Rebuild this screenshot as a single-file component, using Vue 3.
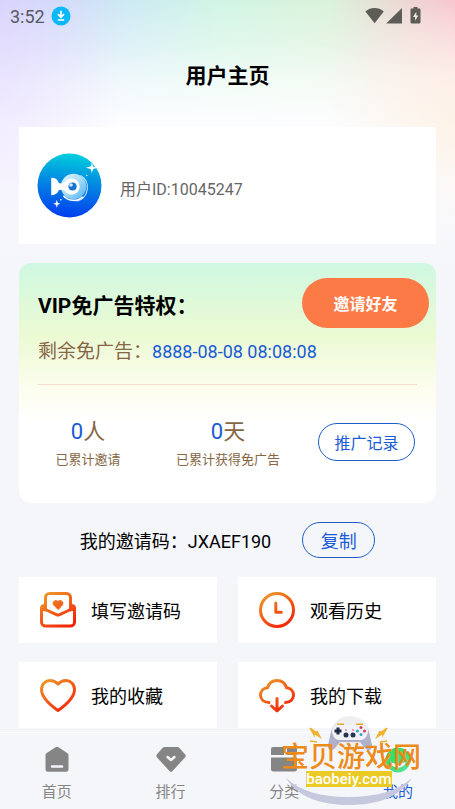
<script setup>
const stats = [
  { value: '0', unit: '人', label: '已累计邀请' },
  { value: '0', unit: '天', label: '已累计获得免广告' },
]
const entries = [
  { id: 'invite', label: '填写邀请码' },
  { id: 'history', label: '观看历史' },
  { id: 'favorite', label: '我的收藏' },
  { id: 'download', label: '我的下载' },
]
const tabs = [
  { id: 'home', label: '首页' },
  { id: 'rank', label: '排行' },
  { id: 'category', label: '分类' },
  { id: 'mine', label: '我的' },
]
</script>

<template>
  <div class="page">
    <div class="status">
      <span>3:52</span>
      <svg class="status-download" viewBox="0 0 20 20" aria-hidden="true">
        <circle cx="10" cy="10" r="9.5" fill="#0cb9f8" />
        <path d="M10 4.800v6M7 8.200l3 3 3-3M6.800 14h6.400" fill="none" stroke="#fff" stroke-width="1.700" />
      </svg>
      <svg class="status-system" viewBox="0 0 56 18" aria-hidden="true">
        <g fill="#5d5d57">
          <path d="M.4 4.500C5.600-.1 13.600-.1 18.800 4.500L9.600 16.200z" />
          <path d="M37 1v15.500H21.200z" />
          <path d="M48.500 0h4v1.600h1.800c.700 0 1.200.500 1.200 1.200v12.500c0 .700-.500 1.200-1.200 1.200h-7.600c-.700 0-1.200-.500-1.200-1.200V2.800c0-.700.500-1.200 1.200-1.200h1.800z" />
        </g>
        <path d="M51.300 4.800L48 10h2.100v3.800l3.200-5.200h-2z" fill="#f0e8dc" />
      </svg>
    </div>

    <h1 class="title">用户主页</h1>

    <main class="content">
      <section class="user">
        <svg class="avatar" viewBox="0 0 64 64" aria-hidden="true">
          <defs>
            <linearGradient id="avatarFill" x1="0.550" y1="0" x2="0.450" y2="1">
              <stop offset="0" stop-color="#00cfdd" />
              <stop offset="0.450" stop-color="#0388e2" />
              <stop offset="1" stop-color="#003df0" />
            </linearGradient>
            <linearGradient id="fishFill" x1="0" y1="0" x2="1" y2="1">
              <stop offset="0" stop-color="#e6f7ff" />
              <stop offset="0.500" stop-color="#a5daf8" />
              <stop offset="1" stop-color="#4bb2f2" />
            </linearGradient>
          </defs>
          <circle cx="32" cy="32" r="31.500" fill="url(#avatarFill)" />
          <circle cx="36" cy="33" r="12.500" fill="url(#fishFill)" />
          <path d="M43 22a14 14 0 0 1-4 25.500" fill="none" stroke="#cfeaff" stroke-width="1" />
          <path d="M26 42c5 6 14 6 19 1" fill="none" stroke="#fff" stroke-width="1.500" />
          <path d="M14 24.500c3.500-.5 6.500 1.500 7.500 5 1.500.8 3.500.5 6-.5v8c-2.500-1-4.500-1-6-.3-1 3-4 5-7.500 4.800z" fill="#fff" />
          <circle cx="34" cy="33" r="8" fill="#fff" />
          <circle cx="35" cy="33" r="4" fill="#1673d2" />
          <circle cx="33.500" cy="31.500" r="1.800" fill="#cdeafc" />
          <path d="M54 9.500l1.300 3.700 4.700 1.300-4.700 1.300L54 19.500l-1.300-3.700-4.700-1.300 4.700-1.300zM19.500 46l.9 3.100 2.600.9-2.600.9-.9 3.100-.9-3.100-2.600-.9 2.600-.9z" fill="#fff" />
          <circle cx="23.500" cy="46" r=".8" fill="#fff" />
          <circle cx="49" cy="22" r=".7" fill="#fff" />
        </svg>
        <span>用户ID:10045247</span>
      </section>

      <section class="vip">
        <div class="vip-head">
          <h2>VIP免广告特权：</h2>
          <button class="invite" type="button">邀请好友</button>
        </div>
        <p class="remain">剩余免广告：<span class="date">8888-08-08 08:08:08</span></p>
        <div class="stats">
          <div v-for="s in stats" :key="s.label" class="stat">
            <strong><span class="number">{{ s.value }}</span>{{ s.unit }}</strong>
            <span>{{ s.label }}</span>
          </div>
          <button class="outline record" type="button">推广记录</button>
        </div>
      </section>

      <div class="code">
        <span>我的邀请码：JXAEF190</span>
        <button class="outline copy" type="button">复制</button>
      </div>

      <div class="entries">
        <a v-for="e in entries" :key="e.id" class="entry" href="#">
          <svg viewBox="0 0 38 38" fill="none" stroke="url(#warm)" stroke-width="3" stroke-linecap="round" stroke-linejoin="round" aria-hidden="true">
            <defs>
              <linearGradient id="warm" gradientUnits="userSpaceOnUse" x1="6" y1="2" x2="28" y2="36">
                <stop offset="0" stop-color="#ee9a28" />
                <stop offset="1" stop-color="#f42208" />
              </linearGradient>
            </defs>
            <template v-if="e.id === 'invite'">
              <path d="M6.500 19V6.500a4 4 0 0 1 4-4h17a4 4 0 0 1 4 4V19M5 14.500a3 3 0 0 0-2.500 3V31a4 4 0 0 0 4 4h25a4 4 0 0 0 4-4V17.500a3 3 0 0 0-2.500-3M3 17l15 6.800a2.500 2.500 0 0 0 2 0l15-6.800" />
              <path d="M19 18.300l-4.500-4.500a2.800 2.800 0 0 1 4.500-3.300 2.800 2.800 0 0 1 4.500 3.300z" fill="url(#warm)" stroke-width="1" />
            </template>
            <template v-else-if="e.id === 'history'">
              <circle cx="19" cy="19" r="16.500" />
              <path d="M17.800 12v9.300h5.500" />
            </template>
            <path v-else-if="e.id === 'favorite'" d="M19 34.500C14 31 2.500 22.500 2.500 13.500 2.500 8 6.500 4.500 11 4.500c4 0 6 1.500 8 3.500 2-2 4-3.500 8-3.500 4.500 0 8.500 3.500 8.500 9 0 9-11.500 17.500-16.500 21z" />
            <path v-else d="M11 26.500C5.500 26.500 2.500 23 2.500 19c0-4 3-7 7-7.300C11 7 14.500 4.500 19 4.500s8 2.500 9.500 7.200c4 .3 7 3.300 7 7.300s-3 7.500-8 7.500M19 22.500v12M13.500 30l5.500 5 5.500-5" />
          </svg>
          <span>{{ e.label }}</span>
        </a>
      </div>
    </main>

    <nav class="tabs">
      <a v-for="t in tabs" :key="t.id" href="#" :class="{ active: t.id === 'mine' }">
        <svg viewBox="0 0 30 28" fill="currentColor" aria-hidden="true">
          <template v-if="t.id === 'home'">
            <path d="M13.500 1.200a2.500 2.500 0 0 1 3 0l8.700 5.700c.8.500 1.300 1.200 1.300 2.100v14.500a2.300 2.300 0 0 1-2.300 2.300H5.800a2.300 2.300 0 0 1-2.300-2.300V9c0-.9.500-1.600 1.300-2.100z" />
            <path d="M10 20.500h10" stroke="#f5f6fa" stroke-width="2.500" stroke-linecap="round" />
          </template>
          <template v-else-if="t.id === 'rank'">
            <path d="M8.500 1h13c.8 0 1.400.3 2 .9l5.700 6.500c.7.900.7 2 0 2.900L16.300 25.200c-.7.700-1.900.7-2.600 0L.8 11.300c-.7-.9-.7-2 0-2.900l5.700-6.500c.6-.6 1.200-.9 2-.9z" />
            <path d="M11.500 11l3.500 3 3.500-3" fill="none" stroke="#f5f6fa" stroke-width="2.500" stroke-linecap="round" stroke-linejoin="round" />
          </template>
          <path v-else-if="t.id === 'category'" d="M4 1h11v8H2V3a2 2 0 0 1 2-2zM18 1h8a2 2 0 0 1 2 2v6H18zM2 11.500h26V23a2.500 2.500 0 0 1-2.500 2.500h-21A2.500 2.500 0 0 1 2 23z" />
          <template v-else>
            <defs>
              <linearGradient id="mineFill" x1="0" y1="0" x2="1" y2="1">
                <stop offset="0" stop-color="#2bd84a" />
                <stop offset="1" stop-color="#5be6a4" />
              </linearGradient>
            </defs>
            <circle cx="15" cy="14" r="12.500" fill="url(#mineFill)" />
            <path d="M7 15.500c1 8 15 8 16 0-3 3-13 3-16 0z" fill="#f5f6fa" />
          </template>
        </svg>
        <span>{{ t.label }}</span>
      </a>
    </nav>

    <svg class="watermark" viewBox="0 0 150 94" aria-hidden="true">
      <path d="M10 63c14 13 35 19 62 19 28 0 49-6 64-19-12 19-34 27-64 27-29 0-51-9-62-27z" fill="#c6c9dd" />
      <circle cx="74" cy="21" r="20" fill="#efeff1" />
      <path d="M61 9.500h7M80 9.500h7" stroke="#dfaa3d" stroke-width="2" />
      <path d="M62 10h24c4 0 6 3 7 7l3 13c1 5-4 7-7 3l-5-6H64l-5 6c-3 4-8 2-7-3l3-13c1-4 3-7 7-7z" fill="#aeb1c9" />
      <path d="M62 10h24c4 0 6 2 6 6s-3 9-7 9H63c-4 0-7-5-7-9s2-6 6-6z" fill="#f1f1f8" />
      <path d="M58.500 16h7M62 12.500v7" stroke="#202b43" stroke-width="3" />
      <g fill="#263451"><circle cx="70" cy="20" r="2.500" /><circle cx="77" cy="20" r="2.500" /></g>
      <g fill="#df3850">
        <circle cx="85" cy="12.500" r="1.500" /><circle cx="88.500" cy="16" r="1.500" />
        <circle cx="70" cy="15" r=".8" /><circle cx="77" cy="15" r=".8" />
      </g>
      <g fill="#3aa3c2"><circle cx="81.500" cy="16" r="1.500" /><circle cx="85" cy="19.500" r="1.500" /></g>
      <path d="M34 13l7 5 0-2 3 6-6-4 0 2zM34 26l7 1M111 13l-7 5 0-2-3 6 6-4 0 2zM111 26l-7 1" fill="#efb22d" stroke="#efb22d" stroke-width="1.500" />
      <rect x="30" y="56" width="86" height="16" fill="#ebca25" />
      <text class="mark-name" x="5" y="52">宝贝游戏网</text>
      <text class="mark-host" x="73" y="69" text-anchor="middle">baobeiy.com</text>
    </svg>
  </div>
</template>

<style>
body {
  margin: 0;
  background: #f5f6fa;
}
</style>

<style scoped>
.page {
  position: relative;
  display: flex;
  flex-direction: column;
  min-height: 100vh;
  font-family: Roboto, "Noto Sans CJK SC", sans-serif;
  color: #000;
  background:
    linear-gradient(180deg, transparent 160px, #f5f6fa 268px),
    radial-gradient(120px 240px at 0 70px, rgba(230, 220, 254, 0.6), transparent),
    radial-gradient(130px 120px at 100% 120px, rgba(253, 240, 226, 0.8), transparent),
    linear-gradient(180deg, transparent 0, rgba(255, 255, 255, 0.35) 45px, rgba(255, 255, 255, 0.7) 80px, #fdfdff 125px),
    linear-gradient(90deg, #cfcdfc 0, #cdeaf4 28%, #d0f5e4 48%, #daf2da 72%, #f8c6d0 100%);
}
.status {
  display: flex;
  align-items: center;
  height: 32px;
  padding: 0 34px 0 10px;
  font-size: 18px;
  color: #555866;
}
.status-download {
  width: 20px;
  height: 20px;
  margin-left: 6px;
}
.status-system {
  width: 56px;
  height: 18px;
  margin-left: auto;
}
.title {
  margin: 0;
  padding: 28px 0 35px;
  font-size: 21px;
  line-height: 32px;
  font-weight: 700;
  text-align: center;
}
.content {
  padding: 0 19px 4px;
}
.user {
  display: flex;
  align-items: center;
  gap: 18px;
  padding: 26px 18px;
  background: #fff;
  font-size: 16px;
  color: #666;
}
.user span {
  padding-top: 4px;
}
.avatar {
  width: 65px;
  height: 65px;
}
.vip {
  margin-top: 19px;
  padding: 15px 19px 33px;
  border-radius: 12px;
  background: linear-gradient(180deg, #cff8e2 0, #ebfad3 30%, #fdfdee 52%, #fff 66%);
}
.vip-head {
  display: flex;
  align-items: center;
  justify-content: space-between;
  margin-right: -12px;
}
h2 {
  margin: 0;
  padding-top: 2px;
  font-size: 21px;
  font-weight: 700;
}
button {
  font-family: inherit;
  cursor: pointer;
}
.invite {
  width: 127px;
  height: 50px;
  padding: 0;
  border: 0;
  border-radius: 25px;
  background: #fc7a46;
  color: #fff;
  font-size: 16px;
  font-weight: 700;
}
.remain {
  margin: 0;
  padding: 8px 0 16px;
  border-bottom: 1px solid #f3ddd0;
  font-size: 19px;
  line-height: 32px;
  color: #866745;
}
.date {
  font-size: 18px;
  color: #1a5bd6;
}
.stats {
  display: grid;
  grid-template-columns: 100px 1fr 97px;
  align-items: start;
  padding: 32px 2px 0 0;
}
.stat {
  display: flex;
  flex-direction: column;
  align-items: center;
  font-size: 13px;
  line-height: 20px;
  white-space: nowrap;
  color: #866745;
}
.stat strong {
  padding-bottom: 3px;
  font-size: 22px;
  line-height: 30px;
  font-weight: 400;
}
.number {
  color: #1a5bd6;
}
.outline {
  padding: 0;
  border: 1px solid #1f5dc8;
  border-radius: 19px;
  background: transparent;
  color: #1a5bd6;
}
.record {
  height: 38px;
  margin-top: 6px;
  font-size: 16px;
}
.code {
  display: flex;
  align-items: center;
  justify-content: center;
  gap: 31px;
  padding: 19px 0;
  font-size: 18px;
}
.copy {
  width: 73px;
  height: 36px;
  font-size: 18px;
}
.entries {
  display: grid;
  grid-template-columns: 1fr 1fr;
  gap: 19px 21px;
}
.entry {
  display: flex;
  align-items: center;
  gap: 14px;
  height: 66px;
  padding-left: 20px;
  background: #fff;
  color: #000;
  font-size: 18px;
  text-decoration: none;
}
.entry svg {
  width: 38px;
  height: 38px;
}
.tabs {
  display: grid;
  grid-template-columns: repeat(4, 1fr);
  margin-top: auto;
  border-top: 1px solid #fff;
  background: #f5f6fa;
}
.tabs a {
  display: flex;
  flex-direction: column;
  align-items: center;
  gap: 7px;
  padding: 13px 0 6px;
  color: #858585;
  font-size: 15px;
  line-height: 22px;
  text-decoration: none;
}
.tabs svg {
  width: 30px;
  height: 28px;
}
.tabs .active {
  color: #1a5bd6;
}
.watermark {
  position: absolute;
  right: 29px;
  bottom: 0;
  width: 150px;
  height: 94px;
  pointer-events: none;
}
.mark-name {
  font-size: 28px;
  font-weight: 500;
  fill: #ed8a19;
}
.mark-host {
  font-size: 15px;
  font-weight: 500;
  fill: #fff;
}
</style>
